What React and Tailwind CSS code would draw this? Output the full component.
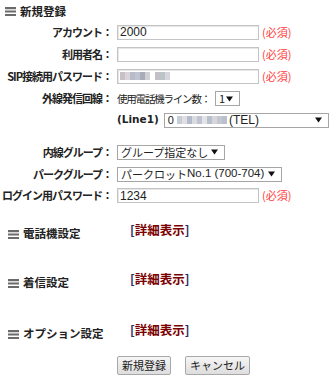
import React from "react";

const JP = "font-['Noto_Sans_CJK_JP',sans-serif]";

function Stripes({ className = "" }) {
  return (
    <svg width="11" height="9" viewBox="0 0 11 9" className={className}>
      <rect x="0" y="0" width="11" height="2" fill="#6b6b6b" />
      <rect x="0" y="2" width="11" height="0.5" fill="#b5b5b5" />
      <rect x="0" y="3.5" width="11" height="2" fill="#6b6b6b" />
      <rect x="0" y="5.5" width="11" height="0.5" fill="#b5b5b5" />
      <rect x="0" y="7" width="11" height="2" fill="#6b6b6b" />
    </svg>
  );
}

function Arrow() {
  return (
    <svg width="7" height="6" viewBox="0 0 7 6" className="shrink-0">
      <path d="M0 0.5 H7 L3.5 5.5 Z" fill="#111" />
    </svg>
  );
}

function Select({ className = "", children }) {
  return (
    <div className={`flex items-center justify-between h-[15px] border border-[#a6a6a6] bg-white pl-[3px] pr-[6px] text-[11px] leading-none text-[#222] ${className}`}>
      <span className="flex items-center whitespace-nowrap">{children}</span>
      <Arrow />
    </div>
  );
}

function Input({ value, children }) {
  return (
    <div className="flex items-center w-[142px] h-[15px] border border-[#c4c4c4] shadow-[inset_1px_1px_0_#e6e6e6] bg-white pl-[2px] font-['Liberation_Sans',sans-serif] text-[12px] leading-none text-[#222]">
      {value}
      {children}
    </div>
  );
}

function Required() {
  return <span className="ml-[3px] text-[11px] text-[#ff3b3b]">(必須)</span>;
}

function Row({ label, h = "h-[22px]", children }) {
  return (
    <div className={`flex items-center ${h}`}>
      <div className="w-[112px] text-right font-bold text-[11px] tracking-[-1px] text-[#222] whitespace-nowrap">{label}</div>
      <div className="ml-[5px] flex items-center">{children}</div>
    </div>
  );
}

function Blur({ colors }) {
  return (
    <span className="flex items-center blur-[0.6px]">
      {colors.map((c, i) => (
        <span key={i} className="inline-block w-[5px] h-[8px]" style={{ background: c }} />
      ))}
    </span>
  );
}

function Section({ title, mt }) {
  return (
    <div className={`flex items-start ${mt}`}>
      <div className="w-[130px] mt-[4px] pl-[8px] flex items-center h-[14px]">
        <Stripes />
        <span className="ml-[4px] font-bold text-[11.5px] text-[#222]">{title}</span>
      </div>
      <div className="h-[14px] flex items-center font-bold text-[12.5px]">
        <span className="text-[#2a2a6a]">[</span>
        <span className="text-[#7a0000]">詳細表示</span>
        <span className="text-[#2a2a6a]">]</span>
      </div>
    </div>
  );
}

export default function App() {
  return (
    <div className={`w-[336px] h-[385px] bg-white ${JP}`}>
      <div className="h-[21px] flex items-center pl-[5px] pt-[2px]">
        <Stripes />
        <span className="ml-[4px] font-bold text-[11.5px] text-[#222]">新規登録</span>
      </div>

      <Row label="アカウント：">
        <Input value="2000" />
        <Required />
      </Row>
      <Row label="利用者名：">
        <Input value="" />
        <Required />
      </Row>
      <Row label="SIP接続用パスワード：">
        <Input>
          <Blur colors={["#c8c0c4", "#d8d4da", "#b8bcc8", "#c0c4d0", "#a8acb8", "#d0d0d4", "#ffffff", "#c4c0c8", "#bcc4c8", "#d6d6dc"]} />
        </Input>
        <Required />
      </Row>
      <Row label="外線発信回線：" h="h-[23px]">
        <span className="w-[97px] whitespace-nowrap text-[10.5px] tracking-[-1.2px] text-[#222]">使用電話機ライン数：</span>
        <Select className="ml-[1px] w-[25px] h-[14px]">1</Select>
      </Row>
      <div className="flex items-center h-[20px]">
        <div className="w-[117px]" />
        <span className="font-['DejaVu_Sans',sans-serif] font-bold text-[10.5px] text-[#222] whitespace-nowrap">(Line1)</span>
        <Select className="ml-[5px] w-[165px] font-['Liberation_Sans',sans-serif]">
          0
          <span className="ml-[3px]">
            <Blur colors={["#c8ccd8", "#e0e0e4", "#b4bccc", "#dcdce0", "#c0c4d0", "#e4e4e8", "#b8c0cc", "#d8d8dc", "#c4c8d4", "#bcc0cc"]} />
          </span>
          <span className="ml-[2px] text-[12px]">(TEL)</span>
        </Select>
      </div>
      <div className="h-[11px]" />
      <Row label="内線グループ：">
        <Select className="w-[108px]">グループ指定なし</Select>
      </Row>
      <Row label="パークグループ：">
        <Select className="w-[165px]">
          パークロット
          <span className="font-['Liberation_Sans',sans-serif] text-[11.5px]">No.1 (700-704)</span>
        </Select>
      </Row>
      <Row label="ログイン用パスワード：" h="h-[21px]">
        <Input value="1234" />
        <Required />
      </Row>

      <Section title="電話機設定" mt="mt-[17px]" />
      <Section title="着信設定" mt="mt-[31px]" />
      <Section title="オプション設定" mt="mt-[33px]" />

      <div className="flex mt-[15px] pl-[117px] gap-[14px]">
        {["新規登録", "キャンセル"].map((b) => (
          <div
            key={b}
            className="h-[19px] px-[4px] flex items-center border border-[#a8a8a8] rounded-[2px] bg-gradient-to-b from-[#f6f6f6] to-[#dddddd] text-[11px] text-[#222]"
          >
            {b}
          </div>
        ))}
      </div>
    </div>
  );
}
